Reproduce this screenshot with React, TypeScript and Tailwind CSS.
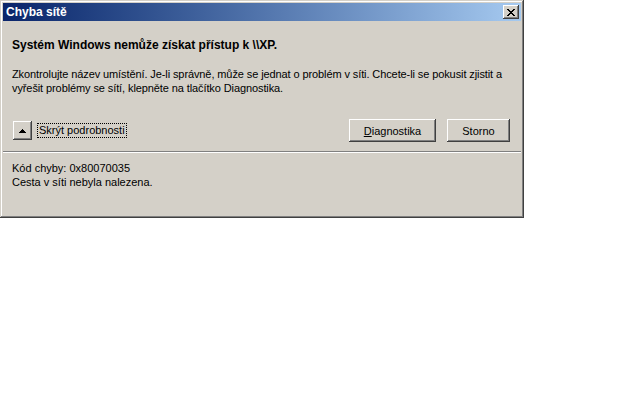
export default function App() {
  const font = { fontFamily: '"Liberation Sans", Arial, sans-serif' };
  return (
    <div className="w-[640px] h-[400px] bg-white" style={font}>
      <div className="w-[524px] h-[218px] bg-[#d4d0c8] p-[3px] flex flex-col shadow-[inset_-1px_-1px_#404040,inset_1px_1px_#d4d0c8,inset_-2px_-2px_#808080,inset_2px_2px_#ffffff]">
        <div className="h-[18px] flex items-center justify-between pl-[3px] pr-[2px] bg-gradient-to-r from-[#0a246a] to-[#a6caf0]">
          <span className="text-white font-bold text-[12px] leading-[14px]">Chyba sítě</span>
          <div className="w-[16px] h-[14px] bg-[#d4d0c8] flex items-center justify-center shadow-[inset_-1px_-1px_#404040,inset_1px_1px_#ffffff,inset_-2px_-2px_#808080,inset_2px_2px_#d4d0c8]">
            <svg width="8" height="7" viewBox="0 0 8 7" shapeRendering="crispEdges">
              <path d="M0 0h2v1h-2zM6 0h2v1h-2zM1 1h2v1h-2zM5 1h2v1h-2zM2 2h4v1h-4zM3 3h2v1h-2zM2 4h4v1h-4zM1 5h2v1h-2zM5 5h2v1h-2zM0 6h2v1h-2zM6 6h2v1h-2z" fill="#000" />
            </svg>
          </div>
        </div>
        <div className="flex flex-col text-[11px] leading-[14px] text-black">
          <div className="px-[9px] mt-[17px] font-bold text-[12px] whitespace-nowrap">{"Systém Windows nemůže získat přístup k \\\\XP."}</div>
          <div className="px-[9px] mt-[15px] whitespace-nowrap tracking-[-0.1px]">
            Zkontrolujte název umístění. Je-li správně, může se jednat o problém v síti. Chcete-li se pokusit zjistit a
            <br />
            vyřešit problémy se sítí, klepněte na tlačítko Diagnostika.
          </div>
          <div className="mt-[24px] h-[23px] flex items-center pl-[10px] pr-[11px]">
            <div className="w-[19px] h-[19px] flex items-center justify-center bg-[#d4d0c8] shadow-[inset_-1px_-1px_#404040,inset_1px_1px_#ffffff,inset_-2px_-2px_#808080,inset_2px_2px_#d4d0c8]">
              <svg width="7" height="4" viewBox="0 0 7 4" shapeRendering="crispEdges">
                <path d="M3 0h1v1h-1zM2 1h3v1h-3zM1 2h5v1h-5zM0 3h7v1h-7z" fill="#000" />
              </svg>
            </div>
            <span className="ml-[5px] px-[1px] border border-dotted border-black leading-[13px]">Skrýt podrobnosti</span>
            <div className="flex-1" />
            <button className="w-[87px] h-[23px] bg-[#d4d0c8] shadow-[inset_-1px_-1px_#404040,inset_1px_1px_#ffffff,inset_-2px_-2px_#808080,inset_2px_2px_#d4d0c8]">
              <span className="underline">D</span>iagnostika
            </button>
            <button className="ml-[11px] w-[63px] h-[23px] bg-[#d4d0c8] shadow-[inset_-1px_-1px_#404040,inset_1px_1px_#ffffff,inset_-2px_-2px_#808080,inset_2px_2px_#d4d0c8]">
              Storno
            </button>
          </div>
          <div className="mt-[9px] h-[2px] border-t border-t-[#808080] border-b border-b-white" />
          <div className="px-[9px] mt-[8px]">
            Kód chyby: 0x80070035
            <br />
            Cesta v síti nebyla nalezena.
          </div>
        </div>
      </div>
    </div>
  );
}
